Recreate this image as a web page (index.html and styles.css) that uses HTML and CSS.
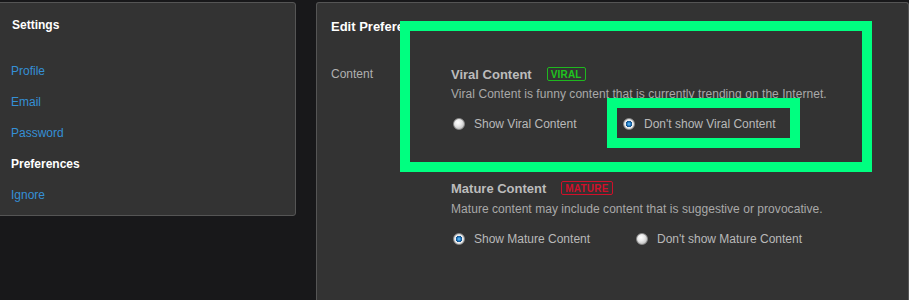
FILE: index.html
```html
<!DOCTYPE html>
<html>
<head>
<meta charset="utf-8">
<link rel="stylesheet" href="styles.css">
</head>
<body>
<div class="layout">
  <aside class="sidebar">
    <div class="side-title">Settings</div>
    <nav class="side-nav">
      <a class="side-link" href="#">Profile</a>
      <a class="side-link" href="#">Email</a>
      <a class="side-link" href="#">Password</a>
      <a class="side-link active" href="#">Preferences</a>
      <a class="side-link" href="#">Ignore</a>
    </nav>
  </aside>
  <main class="main">
    <h1 class="main-title">Edit Preferences</h1>
    <div class="form-row">
      <div class="form-label">Content</div>
      <div class="form-options">
        <section class="pref">
          <div class="pref-head"><span class="pref-name">Viral Content</span><span class="badge badge-viral">VIRAL</span></div>
          <div class="pref-desc">Viral Content is funny content that is currently trending on the Internet.</div>
          <div class="radios">
            <label class="radio-opt opt-a"><span class="radio"></span>Show Viral Content</label>
            <label class="radio-opt"><span class="radio checked"></span>Don't show Viral Content</label>
          </div>
        </section>
        <section class="pref pref-mature">
          <div class="pref-head"><span class="pref-name">Mature Content</span><span class="badge badge-mature">MATURE</span></div>
          <div class="pref-desc">Mature content may include content that is suggestive or provocative.</div>
          <div class="radios">
            <label class="radio-opt opt-b"><span class="radio checked"></span>Show Mature Content</label>
            <label class="radio-opt"><span class="radio"></span>Don't show Mature Content</label>
          </div>
        </section>
      </div>
    </div>
  </main>
</div>
<div class="highlight hl-outer"></div>
<div class="highlight hl-inner"></div>
</body>
</html>
```
FILE: styles.css
```css
html, body {
  margin: 0;
  padding: 0;
  background: #18181a;
  font-family: "Liberation Sans", Arial, sans-serif;
  font-size: 12px;
  overflow: hidden;
}
.layout {
  display: flex;
  align-items: flex-start;
  padding-top: 2px;
  height: 298px;
}
.sidebar {
  margin-left: -10px;
  width: 304px;
  height: 212px;
  background: #333333;
  border: 1px solid #555555;
  border-radius: 3px;
  box-sizing: content-box;
}
.side-title {
  color: #ffffff;
  font-weight: bold;
  font-size: 12px;
  padding: 15px 0 0 21px;
  line-height: 14px;
}
.side-nav {
  display: flex;
  flex-direction: column;
  padding: 32px 0 0 20px;
}
.side-link {
  color: #3590d6;
  text-decoration: none;
  font-size: 12px;
  line-height: 14px;
  height: 31px;
}
.side-link.active {
  color: #ffffff;
  font-weight: bold;
}
.main {
  margin-left: 20px;
  flex: 1;
  height: 296px;
  background: #333333;
  border: 1px solid #555555;
  border-bottom: none;
  border-radius: 3px 3px 0 0;
  padding: 16px 0 0 14px;
}
.main-title {
  margin: 0;
  color: #ffffff;
  font-size: 13px;
  font-weight: bold;
  line-height: 16px;
}
.form-row {
  display: flex;
  margin-top: 32px;
}
.form-label {
  width: 120px;
  color: #b0b0b0;
  font-size: 12px;
  line-height: 14px;
}
.form-options {
  display: flex;
  flex-direction: column;
}
.pref-head {
  display: flex;
  align-items: center;
  gap: 15px;
  height: 14px;
}
.pref-name {
  color: #bcbcbc;
  font-weight: bold;
  font-size: 13px;
}
.badge {
  font-size: 10px;
  font-weight: bold;
  line-height: 11px;
  padding: 1px 3px 0;
  border-radius: 2px;
  letter-spacing: 0.2px;
}
.badge-viral {
  color: #1fc41f;
  border: 1px solid #1fb81f;
}
.badge-mature {
  color: #d0102a;
  border: 1px solid #d0102a;
}
.pref-desc {
  color: #a9a9a9;
  margin-top: 6px;
  line-height: 14px;
  letter-spacing: 0.05px;
}
.pref-mature .pref-desc {
  margin-top: 7px;
}
.radios {
  display: flex;
  margin-top: 16px;
  line-height: 14px;
}
.radio-opt {
  display: flex;
  align-items: center;
  color: #b9b9b9;
}
.opt-a { width: 170px; }
.opt-b { width: 183px; }
.radio {
  width: 12px;
  height: 12px;
  border-radius: 50%;
  margin: 0 9px 0 2px;
  box-sizing: border-box;
  background: radial-gradient(circle at 40% 35%, #ffffff 0%, #e8e8e8 40%, #a8a8a8 100%);
  border: 1px solid #8a8a8a;
}
.radio.checked {
  background: radial-gradient(circle at 50% 50%, #6cc7ff 0%, #1b6fb8 30%, #124f85 42%, #f2f2f2 48%, #d6d6d6 75%, #9a9a9a 100%);
}
.pref-mature {
  margin-top: 50px;
}
.highlight {
  position: absolute;
  border: 10px solid #00ff80;
  box-sizing: border-box;
}
.hl-outer {
  left: 400px;
  top: 21px;
  width: 472px;
  height: 151px;
}
.hl-inner {
  left: 607px;
  top: 98px;
  width: 193px;
  height: 50px;
}
```
